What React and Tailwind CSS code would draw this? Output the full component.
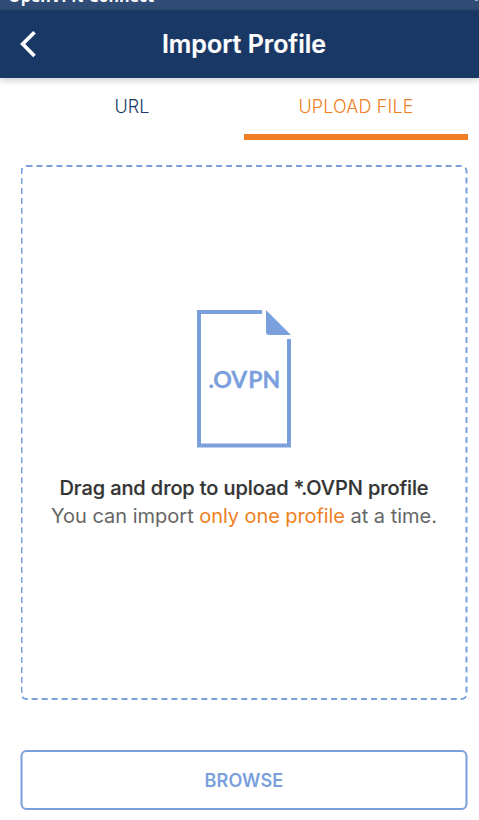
function FileIcon() {
  return (
    <svg width="94" height="138" viewBox="0 0 94 138" fill="none" className="block -translate-x-[0.5px]" aria-hidden="true">
      <path d="M65 2H2V135.5H92V29" stroke="#7b9fdd" strokeWidth="4" />
      <path d="M69 0L94 25H72Q69 25 69 22Z" fill="#7b9fdd" />
      <text x="11.5 16.3 34.3 51.3 65.6" y="77.8" fontSize="23" fontWeight="700" fontFamily="Lato, sans-serif" fill="#7b9fdd" stroke="#7b9fdd" strokeWidth="0.3">.OVPN</text>
    </svg>
  );
}

export default function App() {
  return (
    <main className="flex h-[820px] w-[479px] flex-col overflow-hidden bg-white font-['Inter',sans-serif]">
      <div className="flex h-[10px] shrink-0 items-end justify-between overflow-hidden bg-[#314c76] pl-2 text-white">
        <span className="mb-[3px] whitespace-nowrap font-['Open_Sans',sans-serif] text-[16px] leading-[22px] font-bold">OpenVPN Connect</span>
        <span className="mr-[1px] mb-[9px] h-[2px] w-[3px] bg-[#a5b2c6]" />
      </div>
      <header className="grid h-[68px] shrink-0 grid-cols-[60px_1fr_51px] items-center bg-[#1a3866] shadow-[0_2px_7px_rgba(0,0,0,0.22)]">
        <button aria-label="Back" className="pl-5">
          <svg width="17" height="28" viewBox="0 0 17 28" fill="none">
            <path d="M14.5 2.2L2.7 14L14.5 26" stroke="white" strokeWidth="3.7" />
          </svg>
        </button>
        <h1 className="whitespace-nowrap text-center text-[25px] leading-[32px] font-semibold text-white [-webkit-text-stroke:0.2px_white]">Import Profile</h1>
      </header>
      <nav className="ml-5 grid h-[62px] w-[448px] shrink-0 grid-cols-2 text-[18px]">
        <button className="flex items-start justify-center pt-[15px] font-[350] tracking-[0.1px] text-[#1a3866]">URL</button>
        <button className="flex items-start justify-center border-b-[6px] border-[#ef7f22] pt-[15px] font-[350] tracking-[0.14px] text-[#ef7f22]">UPLOAD FILE</button>
      </nav>
      <section className="mt-[25px] ml-[21px] flex h-[535px] w-[447px] shrink-0 -translate-x-[0.5px] flex-col items-center rounded-[6px] border-2 border-dashed border-[#7b9fdd] pt-[143px]">
        <FileIcon />
        <p className="mt-[26px] whitespace-nowrap text-[20px] leading-7 font-medium tracking-[-0.1px] text-[#333] [-webkit-text-stroke:0.2px_#333]">Drag and drop to upload *.OVPN profile</p>
        <p className="whitespace-nowrap text-[20px] leading-7 text-[#666]">You can import <span className="tracking-[-0.09px] text-[#ef7f22]">only one profile</span> at a time.</p>
      </section>
      <button className="mt-[50px] ml-[21px] h-[60px] w-[447px] shrink-0 -translate-x-[0.5px] rounded-[6px] border-2 border-[#7b9fdd] text-[18px] font-semibold tracking-[0.12px] text-[#7b9fdd]">BROWSE</button>
    </main>
  );
}
